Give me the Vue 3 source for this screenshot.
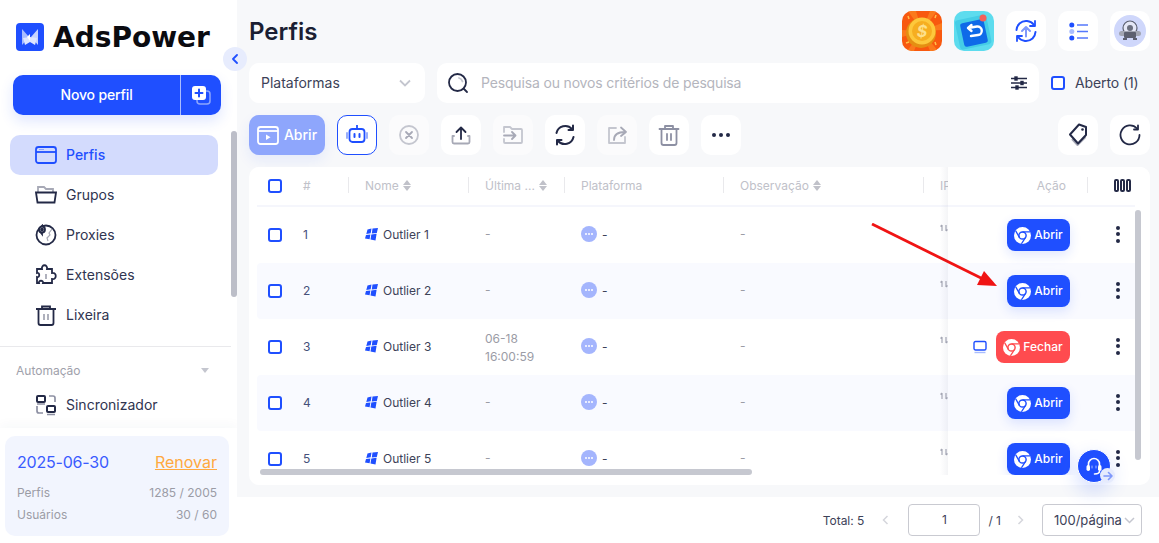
<template>
  <div class="app">
    <aside class="sidebar">
      <div class="logo">
        <svg class="logo-mark" width="28" height="28" viewBox="0 0 28 28">
          <rect width="28" height="28" rx="4" fill="#1f4fff" />
          <path d="M6 6l7 8-7 8z" fill="#a9bdff" />
          <path d="M22 6l-7 8 7 8z" fill="#c8d4ff" />
          <path d="M7 15l7-1v5l-5 3zM21 15l-7-1v5l5 3z" fill="#dfe6ff" />
          <path d="M11 14l3-3v7z" fill="#fff" />
        </svg>
        <span class="logo-text">AdsPower</span>
      </div>
      <div class="new-profile">
        <span class="new-label">Novo perfil</span>
        <span class="new-more">
          <svg width="20" height="20" viewBox="0 0 20 20">
            <rect x="6" y="6" width="13" height="13" rx="3" fill="none" stroke="#8ea6fc" stroke-width="1.5" />
            <rect x="1" y="1" width="14" height="14" rx="3" fill="#fff" />
            <path d="M8 4.500v7M4.500 8h7" stroke="#1f4fff" stroke-width="2" stroke-linecap="round" />
          </svg>
        </span>
      </div>
      <nav class="menu">
        <div v-for="item in menu" :key="item.label" class="menu-item" :class="{ active: item.active }">
          <svg class="menu-icon" width="22" height="22" viewBox="0 0 22 22" fill="none" :stroke="item.active ? '#1f4fff' : '#232946'" stroke-width="1.8" v-html="item.icon"></svg>
          <span>{{ item.label }}</span>
        </div>
      </nav>
      <div class="menu-divider"></div>
      <div class="group-title">
        <span>Automação</span>
        <i class="caret"></i>
      </div>
      <div class="menu-item sync">
        <svg class="menu-icon" width="22" height="22" viewBox="0 0 22 22" fill="none" stroke="#232946" stroke-width="2">
          <rect x="2" y="2" width="8" height="6" rx="1" />
          <rect x="12" y="12" width="8" height="6" rx="1" />
          <path d="M14 2h4a2 2 0 0 1 2 2v4M2 12v5a2 2 0 0 0 2 2h4M12 20.500h8M2 10h8" stroke="#8d90a3" stroke-width="1.700" />
        </svg>
        <span>Sincronizador</span>
      </div>
      <div class="plan-wrap">
        <div class="plan">
          <div class="plan-top">
            <span class="plan-date">2025-06-30</span>
            <span class="plan-renew">Renovar</span>
          </div>
          <div class="plan-row"><span>Perfis</span><span>1285 / 2005</span></div>
          <div class="plan-row"><span>Usuários</span><span>30 / 60</span></div>
        </div>
      </div>
      <div class="side-scroll"></div>
    </aside>

    <button class="collapse" type="button">
      <svg width="8" height="10" viewBox="0 0 8 10"><path d="M6 1L2 5l4 4" fill="none" stroke="#1f4fff" stroke-width="1.8" stroke-linecap="round" stroke-linejoin="round" /></svg>
    </button>

    <main class="main">
      <div class="content">
        <header class="head">
          <h1>Perfis</h1>
          <div class="head-icons">
            <div class="tile coin">
              <svg width="40" height="40" viewBox="0 0 40 40">
                <path d="M20 20L6 0h8zM20 20L28 0h7zM20 20L40 12v7zM20 20L36 40h-8zM20 20L12 40H5zM20 20L0 26v-7z" fill="#fb7a1c" />
                <circle cx="19" cy="22" r="15" fill="#e58f12" />
                <circle cx="20" cy="20" r="13.500" fill="#fdc83c" />
                <circle cx="20" cy="20" r="10" fill="#f6ae20" />
                <text x="20" y="26" class="coin-text">$</text>
                <path d="M6 5l1 3M34 4l-1 3M4 32l3-1M33 31l1 3" stroke="#ffc04a" stroke-width="1.500" />
              </svg>
            </div>
            <div class="tile ret">
              <svg width="40" height="40" viewBox="0 0 40 40">
                <rect x="3" y="6" width="32" height="30" rx="3" fill="#45cde6" transform="rotate(-12 20 20)" />
                <rect x="8" y="10" width="24" height="24" rx="2.500" fill="#0f6ae8" transform="rotate(-12 20 22)" />
                <path d="M14 17l9-1.500a4 4 0 0 1 1 8.500l-7 1M14 17l3.500-3M14 17l3.500 3" fill="none" stroke="#fff" stroke-width="2.400" stroke-linecap="round" stroke-linejoin="round" />
                <circle cx="29" cy="7" r="3.500" fill="#f4605a" />
              </svg>
            </div>
            <div class="tile">
              <svg width="24" height="24" viewBox="0 0 24 24" fill="none" stroke="#1f4fff" stroke-width="2" stroke-linecap="round" stroke-linejoin="round">
                <path d="M5.500 4.500A10 10 0 0 1 20 6M2.500 11A10 10 0 0 1 5.500 4.500" />
                <path d="M18.500 19.500A10 10 0 0 1 4 18M21.500 13a10 10 0 0 1-3 6.500" />
                <path d="M21 2v5h-5M3 22v-5h5" stroke-width="1.800" />
                <path d="M12 17.500V8M8 12l4-4 4 4" stroke="#7f98fb" stroke-width="2" />
              </svg>
            </div>
            <div class="tile">
              <svg width="19" height="19" viewBox="0 0 19 19">
                <circle cx="2.800" cy="3" r="2.500" fill="#1f4fff" />
                <circle cx="2.800" cy="9.500" r="2.500" fill="#a9bdff" />
                <circle cx="2.800" cy="16" r="2.500" fill="#1f4fff" />
                <path d="M8 3h11M8 9.500h11M8 16h11" stroke="#5578fc" stroke-width="1.500" />
              </svg>
            </div>
            <div class="tile">
              <svg width="32" height="32" viewBox="0 0 32 32">
                <circle cx="16" cy="16" r="16" fill="#cfd7fb" />
                <circle cx="16" cy="13" r="7" fill="#e4e7f6" stroke="#5c6070" stroke-width="1.200" />
                <circle cx="16" cy="13" r="3" fill="#6b6f7e" />
                <rect x="5" y="16" width="22" height="5" rx="2.500" fill="#a2a6b4" />
                <rect x="10" y="17" width="12" height="6" rx="1" fill="#5c6070" />
                <path d="M9 23h4v2H9zM19 23h4v2h-4z" fill="#5c6070" />
              </svg>
            </div>
          </div>
        </header>

        <div class="filters">
          <div class="select">
            <span>Plataformas</span>
            <svg width="12" height="8" viewBox="0 0 12 8"><path d="M1 1.500l5 5 5-5" fill="none" stroke="#c4c6cf" stroke-width="1.800" /></svg>
          </div>
          <div class="search">
            <svg width="22" height="22" viewBox="0 0 22 22" fill="none" stroke="#232946" stroke-width="1.800" stroke-linecap="round">
              <circle cx="10.500" cy="10.500" r="8.500" />
              <path d="M17 17l3 3" />
              <path d="M12 6a5 5 0 0 1 3.500 3.500" stroke="#c4c6cf" />
            </svg>
            <span class="search-text">Pesquisa ou novos critérios de pesquisa</span>
            <svg width="16" height="14" viewBox="0 0 16 14" stroke="#232946" stroke-width="1.400" fill="#232946">
              <path d="M0 2.500h16M0 7h16M0 11.500h16" />
              <rect x="4" y="1" width="2" height="3" />
              <rect x="10" y="5.500" width="2" height="3" />
              <rect x="5" y="10" width="2" height="3" />
            </svg>
          </div>
          <label class="open-check">
            <i class="check"></i>
            <span>Aberto (1)</span>
          </label>
        </div>

        <div class="toolbar">
          <button class="btn-open" type="button">
            <svg width="22" height="20" viewBox="0 0 22 20">
              <rect x="1" y="2" width="20" height="17" rx="2.500" fill="none" stroke="#fff" stroke-width="1.800" />
              <path d="M1 6h20" stroke="#fff" stroke-width="1.800" />
              <path d="M9 9.500l4.500 2.700L9 15z" fill="#fff" />
            </svg>
            <span>Abrir</span>
          </button>
          <div class="tool robot">
            <svg width="24" height="22" viewBox="0 0 24 22" fill="none" stroke="#1f4fff" stroke-width="1.800">
              <rect x="4.500" y="5" width="15" height="13" rx="3" />
              <path d="M12 1v4" />
              <path d="M9.500 10v3M14.500 10v3" stroke-linecap="round" stroke-width="2" />
              <path d="M2 9v5M22 9v5" stroke="#8ea6fc" stroke-linecap="round" />
            </svg>
          </div>
          <div v-for="tool in tools" :key="tool.name" class="tool" :class="{ dim: tool.dim }">
            <svg width="22" height="22" viewBox="0 0 22 22" fill="none" stroke-width="1.800" stroke-linecap="round" stroke-linejoin="round" v-html="tool.icon"></svg>
          </div>
          <div class="spacer"></div>
          <div class="tool">
            <svg width="26" height="26" viewBox="0 0 26 26" fill="none" stroke-width="2" stroke-linejoin="round">
              <path d="M7 17l5.500 6 8-8" stroke="#a7a9b6" />
              <path d="M5 12.500L14 2.500l7 2.500 0 8-8 8.500z" stroke="#232946" fill="#fff" />
              <circle cx="17.500" cy="7.500" r="1.300" fill="#232946" stroke="none" />
            </svg>
          </div>
          <div class="tool">
            <svg width="22" height="22" viewBox="0 0 22 22" fill="none" stroke="#232946" stroke-width="1.800" stroke-linecap="round" stroke-linejoin="round">
              <path d="M18 4.500A9.500 9.500 0 1 0 20.500 11" />
              <path d="M19 1.500v4h-4" />
            </svg>
          </div>
        </div>

        <section class="card">
          <div class="table-left">
            <div class="thead row-grid">
              <span class="cell-check"><i class="check"></i></span>
              <span class="th">#</span>
              <span class="th">Nome <i class="sort"></i></span>
              <span class="th">Última ... <i class="sort"></i></span>
              <span class="th">Plataforma</span>
              <span class="th">Observação <i class="sort"></i></span>
              <span class="th last">IP</span>
            </div>
            <div v-for="(row, i) in rows" :key="row.id" class="tr row-grid" :class="{ striped: i % 2 === 1 }">
              <span class="cell-check"><i class="check"></i></span>
              <span class="td num">{{ row.id }}</span>
              <span class="td name">
                <svg width="13" height="13" viewBox="0 0 13 13" fill="#1f4fff">
                  <path d="M2.500 1.500l4-1-.8 4.800-4.400.6zM7.500.5L13 0l-1.200 5-5 .6zM1 7l4.400-.6-.8 4.800L0 10.500zM6.300 6.400l5.300-.6-1.100 6.700-5-1.100z" />
                </svg>
                Outlier {{ row.id }}
              </span>
              <span class="td time" :class="{ stamp: row.time }">{{ row.time || '-' }}</span>
              <span class="td platform">
                <i class="more-dot"><b></b><b></b><b></b></i>
                -
              </span>
              <span class="td time">-</span>
              <span class="td ip">
                <svg width="8" height="8" viewBox="0 0 8 8"><path d="M2 1v6M0.500 2.500L2 1M6 1v6M6 7l1.500-1.500" stroke="#a7a9b6" stroke-width="1.200" fill="none" /></svg>
              </span>
            </div>
          </div>

          <div class="table-right">
            <div class="thead right-head">
              <span class="th action">Ação</span>
              <span class="columns"><i></i><i></i><i></i></span>
            </div>
            <div v-for="(row, i) in rows" :key="row.id" class="tr right-grid" :class="{ striped: i % 2 === 1 }">
              <span class="actions">
                <svg v-if="row.running" width="14" height="14" viewBox="0 0 14 14" fill="none">
                  <rect x="1" y="1.500" width="12" height="8.500" rx="1.500" stroke="#1f4fff" stroke-width="1.400" />
                  <path d="M1.500 12.500h11" stroke="#a9bdff" stroke-width="1.400" />
                </svg>
                <button class="btn-row" :class="{ stop: row.running }" type="button">
                  <svg width="17" height="17" viewBox="0 0 16 16">
                    <circle cx="8" cy="8" r="8" fill="#fff" />
                    <circle cx="8" cy="8" r="3.400" fill="none" :stroke="row.running ? '#ff4b4f' : '#1f4fff'" stroke-width="1.400" />
                    <path d="M8 4.600h7.200M5.100 9.700L1.600 3.700M10.900 9.700L7 15.800" :stroke="row.running ? '#ff4b4f' : '#1f4fff'" stroke-width="1.200" />
                  </svg>
                  <span>{{ row.running ? 'Fechar' : 'Abrir' }}</span>
                </button>
              </span>
              <span class="kebab"><i></i><i></i><i></i></span>
            </div>
          </div>

          <div class="hscroll"></div>
          <div class="vscroll"></div>

          <svg class="arrow" width="134" height="70" viewBox="0 0 134 70">
            <path d="M1 1L112 56" stroke="#f01414" stroke-width="2.800" />
            <path d="M126 63L106 62L113 48z" fill="#f01414" />
          </svg>
        </section>
      </div>

      <footer class="pager">
        <span class="total">Total: 5</span>
        <svg class="chev" width="7" height="10" viewBox="0 0 7 10"><path d="M5.500 1l-4 4 4 4" fill="none" stroke="#d5d6dc" stroke-width="1.500" /></svg>
        <span class="page-input">1</span>
        <span class="page-of">/ 1</span>
        <svg class="chev" width="7" height="10" viewBox="0 0 7 10"><path d="M1.500 1l4 4-4 4" fill="none" stroke="#d5d6dc" stroke-width="1.500" /></svg>
        <span class="page-size">
          100/página
          <svg width="11" height="7" viewBox="0 0 11 7"><path d="M1 1l4.500 4.500L10 1" fill="none" stroke="#c4c6cf" stroke-width="1.500" /></svg>
        </span>
      </footer>
    </main>

    <div class="support">
      <svg width="20" height="20" viewBox="0 0 20 20" fill="none" stroke="#fff" stroke-width="1.600" stroke-linecap="round">
        <path d="M4.500 10V8a5.500 5.500 0 0 1 11 0v2" />
        <rect x="2.500" y="9" width="3.500" height="6" rx="1.700" fill="#fff" stroke="none" />
        <rect x="14" y="9" width="3.500" height="6" rx="1.700" fill="#fff" stroke="none" />
        <path d="M8 10v2M12 10v2" stroke="#a9bdff" stroke-width="1" />
        <path d="M15.500 15c0 2-2 3-5 3" />
      </svg>
      <span class="support-badge">
        <svg width="10" height="10" viewBox="0 0 10 10" fill="none" stroke="#7f98fb" stroke-width="1.600" stroke-linecap="round" stroke-linejoin="round"><path d="M1 5h8M5.500 1.500L9 5 5.500 8.500" /></svg>
      </span>
    </div>
  </div>
</template>

<script setup>
const menu = [
  {
    label: 'Perfis',
    active: true,
    icon: '<rect x="1" y="3" width="20" height="16" rx="2.500"/><path d="M1 8h20"/><path d="M4 5.500h5" stroke="#8ea6fc" stroke-width="1"/>',
  },
  {
    label: 'Grupos',
    icon: '<path d="M3 8V3h6l2 2h7v3" stroke="#a7a9b6"/><path d="M1 8.500h20l-1.500 10h-17z"/>',
  },
  {
    label: 'Proxies',
    icon: '<circle cx="11" cy="11" r="9.500"/><path d="M17 5l-3 4 1 2-3 3 1 3" stroke="#a7a9b6" stroke-width="1.200"/><path d="M7 2v8l-3-4z" fill="#232946"/><circle cx="7" cy="5.500" r="3" fill="#fff"/><circle cx="7" cy="5.500" r="1" fill="#232946"/>',
  },
  {
    label: 'Extensões',
    icon: '<path d="M2 6h5c-1-5 6-5 5 0h5v4c5-1 5 7 0 6v4H8c1-3-5-3-4 0H2v-6c3 1 3-5 0-4z" transform="translate(0 -1)"/><path d="M11 10v5" stroke="#a7a9b6"/>',
  },
  {
    label: 'Lixeira',
    icon: '<path d="M1 5h20M7 5V2.500h8V5"/><path d="M3.500 5v14a2 2 0 0 0 2 2h11a2 2 0 0 0 2-2V5"/><path d="M9 10v6M13 10v6" stroke="#a7a9b6"/>',
  },
]

const tools = [
  {
    name: 'stop',
    dim: true,
    icon: '<circle cx="11" cy="11" r="9" stroke="#c4c6cf"/><path d="M8 8l6 6M14 8l-6 6" stroke="#a7a9b6"/>',
  },
  {
    name: 'upload',
    icon: '<path d="M4 12H2.500v6a1.500 1.500 0 0 0 1.500 1.500h14a1.500 1.500 0 0 0 1.500-1.500v-6H18" stroke="#a7a9b6"/><path d="M11 15V4M6.500 8L11 3.500 15.500 8" stroke="#232946"/>',
  },
  {
    name: 'move',
    dim: true,
    icon: '<path d="M2 8V3h6l2 2h9a1 1 0 0 1 1 1v12a1 1 0 0 1-1 1H3a1 1 0 0 1-1-1v-3" stroke="#c4c6cf"/><path d="M2 11.500h11M10 8l3.500 3.500L10 15" stroke="#a7a9b6"/>',
  },
  {
    name: 'sync',
    icon: '<path d="M2.500 9A9 9 0 0 1 18 5M19.500 13A9 9 0 0 1 4 17" stroke="#232946" stroke-width="2"/><path d="M19 1.500V6h-4.500M3 20.500V16h4.500" stroke="#232946" stroke-width="2"/>',
  },
  {
    name: 'share',
    dim: true,
    icon: '<path d="M19 13v6H3V4h7" stroke="#c4c6cf"/><path d="M8 16c0-6 4-8 11-8M15 3.500L20 8l-5 4" stroke="#a7a9b6"/>',
  },
  {
    name: 'trash',
    icon: '<path d="M1.500 5h19M7 5V2h8v3" stroke="#8d90a3"/><path d="M3.500 5v14a2 2 0 0 0 2 2h11a2 2 0 0 0 2-2V5M9 10v6M13 10v6" stroke="#8d90a3"/>',
  },
  {
    name: 'more',
    icon: '<circle cx="4" cy="11" r="2" fill="#232946"/><circle cx="11" cy="11" r="2" fill="#232946"/><circle cx="18" cy="11" r="2" fill="#232946"/>',
  },
]

const rows = [
  { id: 1 },
  { id: 2 },
  { id: 3, time: '06-18 16:00:59', running: true },
  { id: 4 },
  { id: 5 },
]
</script>

<style>
html,
body {
  margin: 0;
  height: 100%;
  overflow: hidden;
}
</style>

<style scoped>
.app {
  position: relative;
  display: flex;
  width: 1159px;
  height: 543px;
  overflow: hidden;
  background: #f7f8fa;
  font-family: Inter, "Liberation Sans", sans-serif;
  color: #232946;
}

.sidebar {
  position: relative;
  flex: 0 0 237px;
  height: 543px;
  box-sizing: border-box;
  background: #fff;
  overflow: hidden;
}

.logo {
  display: flex;
  align-items: center;
  gap: 9px;
  height: 28px;
  padding: 23px 0 0 16px;
}

.logo-text {
  font-family: "DejaVu Sans", sans-serif;
  font-size: 28px;
  font-weight: 700;
  color: #0b0b10;
}

.new-profile {
  display: flex;
  align-items: center;
  width: 208px;
  height: 40px;
  margin: 24px 0 0 13px;
  background: #1f4fff;
  border-radius: 10px;
  color: #fff;
  font-size: 14px;
  font-weight: 500;
  box-shadow: 0 6px 14px rgba(31, 79, 255, 0.14);
}

.new-label {
  flex: 1;
  margin-top: -2px;
  text-align: center;
  letter-spacing: -0.15px;
}

.new-more {
  display: flex;
  align-items: center;
  justify-content: center;
  width: 40px;
  height: 40px;
  border-left: 1px solid #a9bdff;
}

.menu {
  margin: 20px 0 0 10px;
}

.menu-item {
  display: flex;
  align-items: center;
  gap: 9px;
  width: 208px;
  height: 40px;
  box-sizing: border-box;
  padding-left: 25px;
  border-radius: 10px;
  font-size: 14px;
  color: #2f3450;
}

.menu-item span {
  margin-top: -2px;
}

.menu-item.active {
  background: #d3dbfd;
  color: #1f4fff;
  font-weight: 500;
}

.menu-icon {
  flex: none;
  width: 22px;
  height: 22px;
}

.menu-divider {
  width: 231px;
  height: 1px;
  margin-top: 11px;
  background: #e9e9ec;
}

.group-title {
  display: flex;
  align-items: center;
  justify-content: space-between;
  width: 193px;
  padding: 16px 0 0 16px;
  font-size: 12px;
  line-height: 15px;
  color: #a0a1ab;
}

.caret {
  width: 0;
  height: 0;
  border-left: 4px solid transparent;
  border-right: 4px solid transparent;
  border-top: 5px solid #c4c6cf;
}

.sync {
  margin: 7px 0 0 10px;
}

.plan-wrap {
  position: absolute;
  left: 0;
  right: 0;
  bottom: 0;
  height: 115px;
  background: #fff;
  box-shadow: 0 -4px 10px rgba(40, 50, 90, 0.03);
}

.plan {
  box-sizing: border-box;
  width: 224px;
  height: 100px;
  margin: 8px 0 0 5px;
  padding: 16px 12px 0;
  border-radius: 10px;
  background: #f2f5fe;
}

.plan-top {
  display: flex;
  justify-content: space-between;
  align-items: center;
  height: 20px;
  margin-bottom: 10px;
  font-size: 16px;
}

.plan-date {
  color: #3a5bff;
  letter-spacing: -0.2px;
}

.plan-renew {
  color: #ffa940;
  text-decoration: underline;
}

.plan-row {
  display: flex;
  justify-content: space-between;
  height: 22px;
  line-height: 22px;
  font-size: 12px;
  color: #9b9ca6;
}

.side-scroll {
  position: absolute;
  left: 231px;
  top: 131px;
  width: 6px;
  height: 166px;
  border-radius: 3px;
  background: #bcbec8;
}

.collapse {
  position: absolute;
  left: 223px;
  top: 47px;
  z-index: 3;
  display: flex;
  align-items: center;
  justify-content: center;
  width: 24px;
  height: 24px;
  padding: 0;
  border: 0;
  border-radius: 50%;
  background: #e7ecfd;
}

.main {
  flex: 1;
  display: flex;
  flex-direction: column;
  min-width: 0;
}

.content {
  box-sizing: border-box;
  height: 497px;
  padding: 11px 9px 0 12px;
}

.head {
  display: flex;
  justify-content: space-between;
  align-items: center;
  height: 40px;
}

.head h1 {
  margin: 0;
  font-size: 24px;
  font-weight: 600;
  color: #1b1f33;
}

.head-icons {
  display: flex;
  gap: 12px;
}

.tile {
  display: flex;
  align-items: center;
  justify-content: center;
  width: 40px;
  height: 40px;
  overflow: hidden;
  border-radius: 10px;
  background: #fff;
}

.coin {
  background: #f8590f;
}

.coin-text {
  font-family: Inter, sans-serif;
  font-size: 16px;
  font-style: italic;
  font-weight: 700;
  fill: #fde08a;
  text-anchor: middle;
}

.ret {
  background: #5ddcee;
}

.filters {
  display: flex;
  align-items: center;
  gap: 12px;
  height: 40px;
  margin-top: 12px;
}

.select {
  display: flex;
  align-items: center;
  justify-content: space-between;
  box-sizing: border-box;
  width: 176px;
  height: 40px;
  padding: 0 14px 0 12px;
  border-radius: 10px;
  background: #fff;
  font-size: 14px;
  color: #3d4258;
}

.select span {
  margin-top: -2px;
}

.search {
  display: flex;
  align-items: center;
  box-sizing: border-box;
  width: 602px;
  height: 40px;
  padding: 0 12px 0 10px;
  border-radius: 10px;
  background: #fff;
}

.search-text {
  flex: 1;
  margin: -2px 0 0 12px;
  font-size: 14px;
  letter-spacing: -0.16px;
  color: #b4b5bd;
}

.open-check {
  display: flex;
  align-items: center;
  gap: 10px;
  font-size: 14px;
  letter-spacing: -0.1px;
  color: #3d4258;
}

.open-check span {
  margin-top: -2px;
}

.check {
  display: block;
  box-sizing: border-box;
  width: 14px;
  height: 14px;
  border: 2px solid #1f4fff;
  border-radius: 3px;
  background: #fff;
}

.toolbar {
  display: flex;
  align-items: center;
  gap: 12px;
  height: 40px;
  margin-top: 12px;
}

.spacer {
  flex: 1;
}

.btn-open {
  display: flex;
  align-items: center;
  justify-content: center;
  gap: 5px;
  width: 76px;
  height: 40px;
  padding: 0;
  border: 0;
  border-radius: 10px;
  background: #8ea6fc;
  color: #fff;
  font: 500 14px Inter, sans-serif;
  box-shadow: 0 6px 14px rgba(31, 79, 255, 0.08);
}

.btn-open span {
  margin-top: -2px;
}

.tool {
  display: flex;
  align-items: center;
  justify-content: center;
  box-sizing: border-box;
  width: 40px;
  height: 40px;
  border-radius: 10px;
  background: #fff;
}

.tool.dim {
  background: #fbfbfc;
}

.robot {
  border: 1px solid #1f4fff;
}

.card {
  position: relative;
  display: flex;
  height: 318px;
  margin-top: 12px;
  overflow: hidden;
  border-radius: 10px;
  background: #fff;
}

.table-left {
  flex: 0 0 699px;
  height: 308px;
  overflow: hidden;
}

.table-right {
  position: relative;
  flex: 1;
  height: 308px;
  overflow: hidden;
  background: #fff;
}

.card::after {
  content: "";
  position: absolute;
  left: 691px;
  top: 0;
  width: 8px;
  height: 308px;
  background: linear-gradient(90deg, rgba(40, 50, 90, 0), rgba(40, 50, 90, 0.05));
}

.row-grid {
  display: grid;
  grid-template-columns: 30px 62px 120px 96px 159px 200px 1fr;
  margin-left: 8px;
}

.right-grid {
  display: grid;
  grid-template-columns: 122px 65px;
}

.right-head {
  display: grid;
  grid-template-columns: 140px 1fr;
}

.thead {
  height: 40px;
  align-items: center;
  box-sizing: border-box;
  border-bottom: 2px solid #f5f6fc;
  font-size: 12px;
  color: #c0c1c9;
}

.table-right .thead {
  margin-right: 15px;
}

.th {
  position: relative;
  display: flex;
  align-items: center;
  gap: 4px;
  height: 22px;
  margin-top: -2px;
  padding-left: 16px;
  white-space: nowrap;
}

.th::before {
  content: "";
  position: absolute;
  left: -1px;
  top: 3px;
  width: 1px;
  height: 16px;
  background: #e9e9ec;
}

.row-grid .th:nth-child(2)::before {
  display: none;
}

.sort {
  position: relative;
  display: block;
  width: 8px;
  height: 11px;
}

.sort::before,
.sort::after {
  content: "";
  position: absolute;
  left: 0;
  border-left: 4px solid transparent;
  border-right: 4px solid transparent;
}

.sort::before {
  top: 0;
  border-bottom: 5px solid #c0c1c9;
}

.sort::after {
  bottom: 0;
  border-top: 5px solid #c0c1c9;
}

.tr {
  height: 56px;
  align-items: center;
  font-size: 12px;
  color: #3d4258;
}

.tr.striped {
  background: #f9faff;
  border-radius: 4px 0 0 4px;
}

.table-right .tr.striped {
  border-radius: 0;
  margin-right: 15px;
}

.cell-check {
  padding-left: 11px;
}

.td {
  margin-top: -2px;
  padding-left: 16px;
}

.num {
  color: #46507a;
}

.name {
  display: flex;
  align-items: center;
  gap: 5px;
}

.time {
  color: #9b9ca6;
  line-height: 18px;
  padding-right: 20px;
}

.stamp {
  margin-top: 2px;
}

.platform {
  display: flex;
  align-items: center;
  gap: 5px;
}

.more-dot {
  display: flex;
  align-items: center;
  justify-content: center;
  gap: 1px;
  width: 16px;
  height: 16px;
  border-radius: 50%;
  background: #a4b5fd;
}

.more-dot b {
  width: 2px;
  height: 2px;
  border-radius: 50%;
  background: #fff;
}

.ip {
  display: flex;
  margin-top: -14px;
}

.action {
  justify-content: flex-end;
  padding-right: 22px;
  padding-left: 0;
}

.action::before {
  left: auto;
  right: 0;
}

.columns {
  display: flex;
  gap: 1px;
  margin: -2px 0 0 26px;
}

.columns i {
  display: block;
  box-sizing: border-box;
  width: 5px;
  height: 13px;
  border: 2px solid #232946;
  border-radius: 2px;
}

.actions {
  display: flex;
  align-items: center;
  justify-content: flex-end;
  gap: 9px;
}

.btn-row {
  display: flex;
  align-items: center;
  justify-content: center;
  gap: 3px;
  width: 63px;
  height: 32px;
  padding: 0;
  border: 0;
  border-radius: 8px;
  background: #1f4fff;
  color: #fff;
  font: 500 12px Inter, sans-serif;
  box-shadow: 0 4px 12px rgba(31, 79, 255, 0.14);
}

.btn-row span {
  margin-top: -2px;
}

.btn-row.stop {
  width: 74px;
  background: #ff4b4f;
  box-shadow: none;
}

.kebab {
  display: flex;
  flex-direction: column;
  align-items: center;
  gap: 2.500px;
  width: 96px;
  margin-top: -2px;
}

.kebab i {
  width: 4px;
  height: 4px;
  border-radius: 50%;
  background: #232946;
}

.hscroll {
  position: absolute;
  left: 11px;
  top: 302px;
  width: 492px;
  height: 6px;
  border-radius: 3px;
  background: #c6c8d0;
}

.vscroll {
  position: absolute;
  left: 886px;
  top: 43px;
  width: 6px;
  height: 250px;
  border-radius: 3px;
  background: #c6c8d0;
}

.arrow {
  position: absolute;
  left: 622px;
  top: 56px;
}

.pager {
  flex: 1;
  display: flex;
  align-items: center;
  justify-content: flex-end;
  padding-right: 17px;
  background: #fff;
  font-size: 12px;
  color: #3d4258;
}

.total {
  margin-right: 18px;
}

.page-input {
  box-sizing: border-box;
  width: 72px;
  height: 32px;
  margin-left: 19px;
  border: 1px solid #c9cad1;
  border-radius: 4px;
  font-size: 12px;
  line-height: 30px;
  text-align: center;
}

.page-of {
  margin: 0 16px 0 8px;
  font-size: 12px;
}

.page-size {
  display: flex;
  align-items: center;
  justify-content: space-between;
  box-sizing: border-box;
  width: 100px;
  height: 32px;
  margin-left: 18px;
  padding: 0 6px 0 11px;
  border: 1px solid #c9cad1;
  border-radius: 4px;
  font-size: 13px;
}

.support {
  position: absolute;
  left: 1077px;
  top: 449px;
  z-index: 4;
  display: flex;
  align-items: center;
  justify-content: center;
  box-sizing: border-box;
  width: 34px;
  height: 34px;
  border: 1px solid #fff;
  border-radius: 50%;
  background: #1f4fff;
  box-shadow: 0 8px 20px rgba(31, 79, 255, 0.2);
}

.support-badge {
  position: absolute;
  right: -5px;
  bottom: -1px;
  display: flex;
  align-items: center;
  justify-content: center;
  width: 15px;
  height: 15px;
  border-radius: 50%;
  background: #e6ebfd;
}
</style>
